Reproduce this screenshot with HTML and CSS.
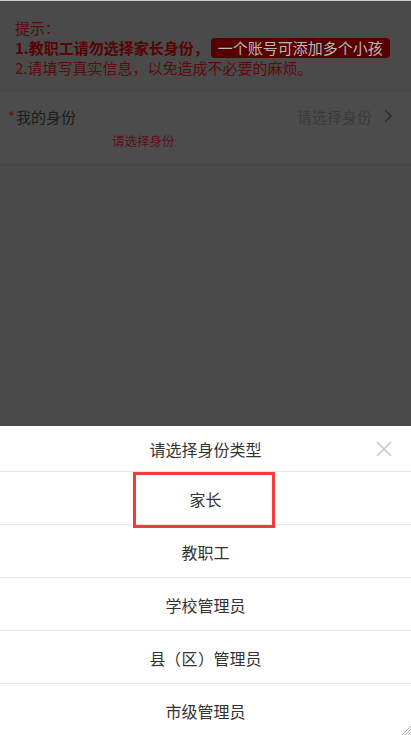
FILE: index.html
```html
<!DOCTYPE html>
<html lang="zh-CN">
<head>
<meta charset="utf-8">
<title>选择身份</title>
<link rel="stylesheet" href="styles.css">
</head>
<body>
<div class="page">
  <div class="hint">
    <div class="hint-line">提示：</div>
    <div class="hint-line bold">1.教职工请勿选择家长身份，<span class="badge">一个账号可添加多个小孩</span></div>
    <div class="hint-line">2.请填写真实信息，以免造成不必要的麻烦。</div>
  </div>
  <div class="card">
    <div class="field">
      <div class="label"><span class="star">*</span>我的身份</div>
      <div class="value">请选择身份
        <svg class="chev" width="8" height="14" viewBox="0 0 8 14"><path d="M1 1 L7 7 L1 13" fill="none" stroke="currentColor" stroke-width="1.4"/></svg>
      </div>
    </div>
    <div class="error">请选择身份</div>
  </div>
</div>
<div class="sheet">
  <div class="sheet-head">
    <span class="sheet-title">请选择身份类型</span>
    <svg class="close" width="16" height="16" viewBox="0 0 16 16"><path d="M1 1 L15 15 M15 1 L1 15" stroke="currentColor" stroke-width="1.6" fill="none"/></svg>
  </div>
  <div class="option first">家长<span class="mark"></span></div>
  <div class="option">教职工</div>
  <div class="option">学校管理员</div>
  <div class="option">县<span class="paren">（</span>区<span class="paren">）</span>管理员</div>
  <div class="option">市级管理员</div>
  <svg class="grip" width="11" height="11" viewBox="0 0 11 11"><path d="M11 2 L2 11 M11 5 L5 11 M11 8 L8 11" stroke="#b0b0b0" stroke-width="1" fill="none"/></svg>
</div>
</body>
</html>
```
FILE: styles.css
```css
html, body {
  margin: 0;
  padding: 0;
}
body {
  width: 411px;
  height: 735px;
  overflow: hidden;
  background: #4a4a4a;
  font-family: "Noto Sans CJK SC", "Liberation Sans", sans-serif;
  border-top: 1px solid #c9c9c9;
  box-sizing: border-box;
}
.page {
  display: flex;
  flex-direction: column;
}
.hint {
  padding: 17px 15px 12px 15px;
  color: #5c0c0c;
  font-size: 15px;
}
.hint-line {
  line-height: 20px;
  height: 20px;
  white-space: nowrap;
}
.hint-line.bold {
  font-weight: bold;
  color: #580202;
}
.badge {
  display: inline-block;
  background: #560000;
  color: #b9b9b9;
  font-weight: normal;
  border-radius: 4px;
  padding: 0 7px;
  line-height: 20px;
  margin-left: 2px;
}
.card {
  background: #4c4c4c;
  border-top: 1px solid #474747;
  border-bottom: 1px solid #464646;
  padding: 14px 0 13px 0;
}
.field {
  display: flex;
  justify-content: space-between;
  align-items: center;
  padding: 0 19px 0 8px;
  height: 22px;
}
.label {
  font-size: 15px;
  color: #1c1c1c;
}
.star {
  color: #6a1010;
  margin-right: 1px;
}
.value {
  display: flex;
  align-items: center;
  gap: 12px;
  font-size: 15px;
  color: #3a3a3a;
}
.chev {
  color: #2a2a2a;
}
.error {
  padding-left: 112px;
  font-size: 12.5px;
  color: #5c0f1c;
  line-height: 20px;
  margin-top: 4px;
}
.sheet {
  position: fixed;
  left: 0;
  right: 0;
  top: 426px;
  bottom: 0;
  background: #ffffff;
  overflow: hidden;
}
.sheet-head {
  position: relative;
  height: 46px;
  display: flex;
  align-items: center;
  justify-content: center;
  border-bottom: 1px solid #e6e6ea;
  box-sizing: border-box;
}
.sheet-title {
  font-size: 16px;
  color: #333333;
}
.close {
  position: absolute;
  right: 19px;
  top: 15px;
  color: #c6c6c6;
}
.option {
  position: relative;
  height: 53px;
  display: flex;
  align-items: center;
  justify-content: center;
  font-size: 16px;
  color: #333333;
  border-bottom: 1px solid #e6e6ea;
  box-sizing: border-box;
  padding-top: 2px;
}
.paren {
  display: inline-block;
  width: 16px;
  text-align: center;
  font-family: "Liberation Sans", sans-serif;
}
.mark {
  position: absolute;
  left: 133px;
  top: 0;
  width: 142px;
  height: 56px;
  border: 3px solid #f43a3a;
  box-sizing: border-box;
  z-index: 2;
}
.grip {
  position: absolute;
  right: 0;
  bottom: 0;
}
```
